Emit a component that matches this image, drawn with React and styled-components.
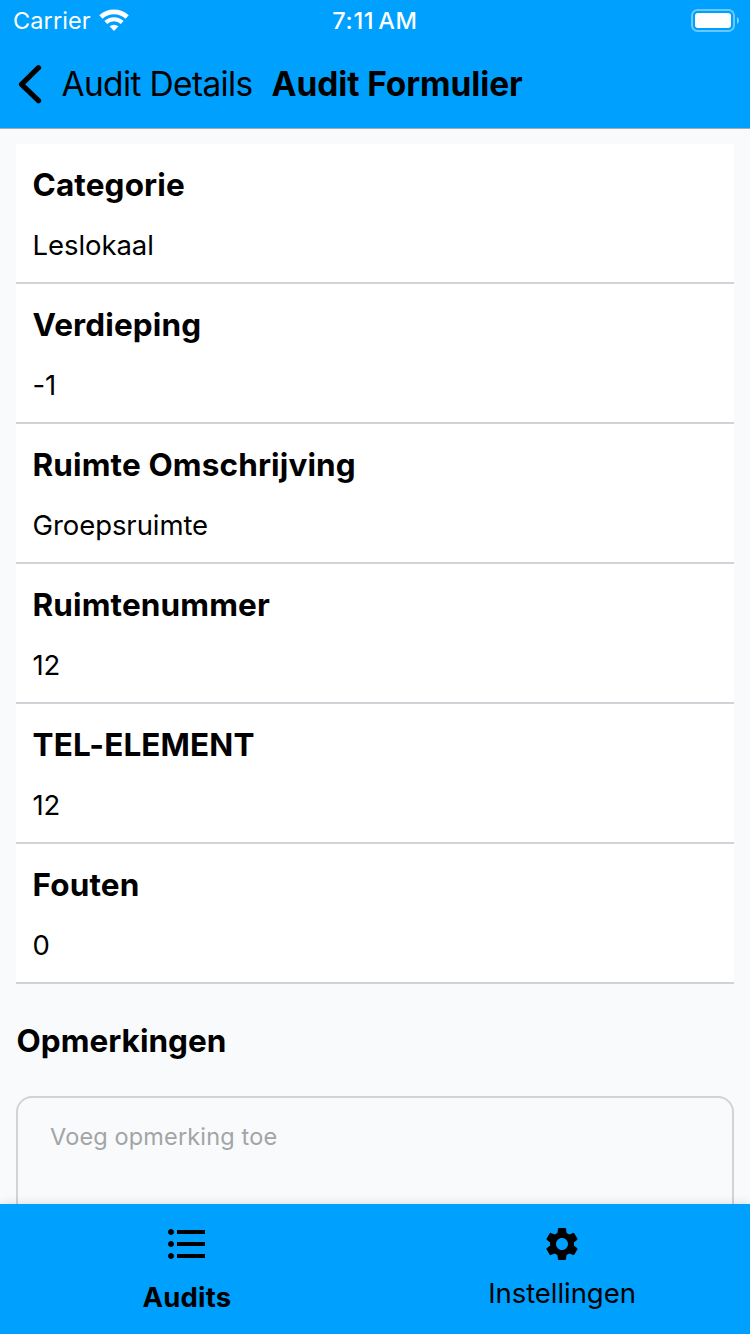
import React from "react";
import styled, { createGlobalStyle } from "styled-components";
import { MdFormatListBulleted, MdSettings } from "react-icons/md";

const GlobalStyle = createGlobalStyle`
  * { box-sizing: border-box; }
  html, body { margin: 0; padding: 0; }
  body {
    font-family: Inter, "Liberation Sans", sans-serif;
    color: #000;
    background: #f9fafc;
  }
`;

const Screen = styled.div`
  width: 750px;
  height: 1334px;
  display: flex;
  flex-direction: column;
  overflow: hidden;
  background: #f9fafc;
`;

const Label = styled.span`
  display: block;
  white-space: nowrap;
  font-size: ${(p) => p.$size}px;
  line-height: ${(p) => p.$line || 40}px;
  font-weight: ${(p) => p.$weight || 400};
  letter-spacing: ${(p) => p.$track || 0}px;
  word-spacing: ${(p) => p.$word || 0}px;
`;

const Header = styled.header`
  flex: none;
  height: 129px;
  background: #00a0fe;
  border-bottom: 1px solid #a3a9b0;
`;

const StatusBar = styled.div`
  display: grid;
  grid-template-columns: 1fr auto 1fr;
  align-items: center;
  height: 40px;
  padding: 0 11px 0 13px;
  color: #fff;
`;

const Carrier = styled.div`
  display: flex;
  align-items: center;
  gap: 8.5px;
  padding-top: 1px;
`;

const Time = styled(Label)`
  padding: 1px 2px 0 0;
`;

const Battery = styled.svg`
  justify-self: end;
`;

const NavBar = styled.div`
  display: flex;
  align-items: center;
  height: 88px;
  padding-left: 18px;
`;

const BackButton = styled.button`
  display: flex;
  align-items: center;
  gap: 19.5px;
  margin-right: 19px;
  padding: 0;
  border: 0;
  background: none;
  color: inherit;
  font-family: inherit;
`;

const Content = styled.main`
  flex: 1;
  min-height: 0;
  overflow: hidden;
  padding: 15px 16px 0;
`;

const Field = styled.section`
  height: 140px;
  padding: 21px 16.5px 0;
  background: #fff;
  border-bottom: 2px solid #d2d3d8;
  display: flex;
  flex-direction: column;
  gap: 20px;
`;

const RemarksTitle = styled.div`
  padding: 37px 0 35px 0.5px;
`;

const RemarksBox = styled.textarea`
  display: block;
  width: 100%;
  height: 200px;
  padding: 20px 32px;
  border: 2px solid #d2d3d5;
  border-radius: 16px;
  background: transparent;
  resize: none;
  outline: none;
  font: 400 23.5px/38px Inter, "Liberation Sans", sans-serif;
  letter-spacing: 0.15px;
  &::placeholder { color: #a3a4a6; opacity: 1; }
`;

const TabBar = styled.nav`
  flex: none;
  position: relative;
  display: grid;
  grid-template-columns: 1fr 1fr;
  height: 130px;
  background: #00a0fe;
  box-shadow: 0 0 10px rgba(0, 0, 0, 0.13);
`;

const Tab = styled.div`
  display: flex;
  flex-direction: column;
  align-items: center;
  padding-top: ${(p) => p.$top}px;
  padding-right: 1px;
  gap: 9px;
`;

const fields = [
  { title: "Categorie", value: "Leslokaal" },
  { title: "Verdieping", value: "-1" },
  { title: "Ruimte Omschrijving", value: "Groepsruimte" },
  { title: "Ruimtenummer", value: "12" },
  { title: "TEL-ELEMENT", value: "12" },
  { title: "Fouten", value: "0" },
];

function WifiIcon() {
  return (
    <svg width="32" height="24" viewBox="0 0 32 24" fill="none">
      <path d="M1.9 8.1a19 19 0 0 1 26.2 0" stroke="#fff" strokeWidth="4.8" />
      <path d="M6.8 13.5a12 12 0 0 1 16.4 0" stroke="#fff" strokeWidth="4.2" />
      <path d="M10.6 17.3a6.8 6.8 0 0 1 8.8 0L15 21.9Z" fill="#fff" />
    </svg>
  );
}

function BatteryIcon() {
  return (
    <Battery width="48" height="24" viewBox="0 0 48 24" fill="none">
      <rect x="1" y="1" width="42" height="21" rx="5.5" stroke="#fff" strokeOpacity="0.42" strokeWidth="2" />
      <rect x="4" y="4" width="36" height="15" rx="3" fill="#fff" />
      <path d="M46 8c2.6 1.5 2.6 5.5 0 7Z" fill="#fff" fillOpacity="0.5" />
    </Battery>
  );
}

function BackIcon() {
  return (
    <svg width="24" height="40" viewBox="0 0 24 40" fill="none">
      <path d="M20.5 3.7L3.5 20.3l17 16.4" stroke="#000" strokeWidth="5.2" strokeLinecap="round" strokeLinejoin="round" />
    </svg>
  );
}

export default function App() {
  return (
    <Screen>
      <GlobalStyle />
      <Header>
        <StatusBar>
          <Carrier>
            <Label $size={23.5} $track={0.1}>Carrier</Label>
            <WifiIcon />
          </Carrier>
          <Time $size={23.5} $weight={550} $track={0.7} $word={-3}>7:11 AM</Time>
          <BatteryIcon />
        </StatusBar>
        <NavBar>
          <BackButton>
            <BackIcon />
            <Label $size={33.5} $track={-0.65}>Audit Details</Label>
          </BackButton>
          <Label $size={33.5} $weight={700} $track={-0.1}>Audit Formulier</Label>
        </NavBar>
      </Header>
      <Content>
        {fields.map((f) => (
          <Field key={f.title}>
            <Label $size={31.5} $weight={700} $track={0.13}>{f.title}</Label>
            <Label $size={27.5} $track={-0.07}>{f.value}</Label>
          </Field>
        ))}
        <RemarksTitle>
          <Label $size={31.5} $weight={700} $track={0.03}>Opmerkingen</Label>
        </RemarksTitle>
        <RemarksBox placeholder="Voeg opmerking toe" />
      </Content>
      <TabBar>
        <Tab $top={16}>
          <MdFormatListBulleted size={48} />
          <Label $size={27.5} $weight={700} $track={0.2}>Audits</Label>
        </Tab>
        <Tab $top={20}>
          <MdSettings size={40} />
          <Label $size={27.5} $track={-0.05}>Instellingen</Label>
        </Tab>
      </TabBar>
    </Screen>
  );
}
